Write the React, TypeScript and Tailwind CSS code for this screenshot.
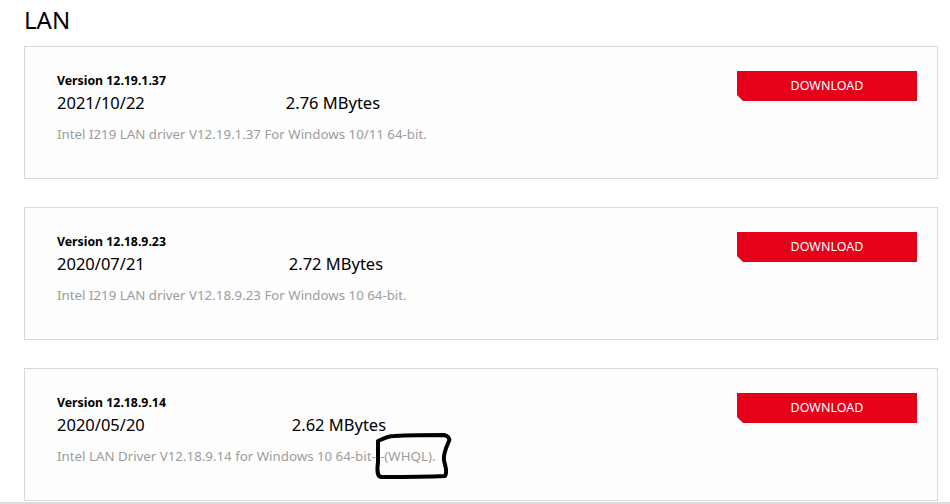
const drivers = [
  {
    version: "12.19.1.37",
    date: "2021/10/22",
    size: "2.76 MBytes",
    sizeGap: "ml-[141px]",
    desc: "Intel I219 LAN driver V12.19.1.37 For Windows 10/11 64-bit.",
  },
  {
    version: "12.18.9.23",
    date: "2020/07/21",
    size: "2.72 MBytes",
    sizeGap: "ml-[144px]",
    desc: "Intel I219 LAN driver V12.18.9.23 For Windows 10 64-bit.",
  },
  {
    version: "12.18.9.14",
    date: "2020/05/20",
    size: "2.62 MBytes",
    sizeGap: "ml-[147px]",
    desc: "Intel LAN Driver V12.18.9.14 for Windows 10 64-bit---(WHQL).",
    marked: true,
  },
];

const DriverCard = ({ d }: { d: (typeof drivers)[number] }) => (
  <div className="relative flex justify-between h-[133px] border border-[#d9d9d9] bg-[#fefefe] pt-[24px] pl-[32px] pr-[20px]">
    <div className="pt-[2px]">
      <div className="text-[12.3px] leading-[16px] font-bold text-black">Version {d.version}</div>
      <div className="mt-[4px] flex text-[16.5px] leading-[20px] text-black">
        <span>{d.date}</span>
        <span className={d.sizeGap}>{d.size}</span>
      </div>
      <div className="relative mt-[11px] text-[13.3px] leading-[20px] text-[#9c9c9c]">
        {d.desc}
        {d.marked && (
          // hand drawn marker around (WHQL)
          <svg
            className="absolute left-[317px] top-[-14px] overflow-visible"
            width="80"
            height="50"
            viewBox="0 0 80 50"
            fill="none"
          >
            <path
              d="M4 9 C 10 6, 14 4, 20 4 C 40 3, 60 3, 70 3 C 74 4, 76 6, 75 9 C 72 16, 69 22, 70 28 C 71 34, 74 40, 71 44 C 50 45, 25 45, 7 45 C 3 44, 3 38, 4 30 C 4 22, 4 15, 4 9 Z"
              stroke="black"
              strokeWidth="4"
              strokeLinejoin="round"
            />
          </svg>
        )}
      </div>
    </div>
    <button className="w-[180px] h-[30px] pt-[1px] bg-[#e60019] text-white text-[12.5px] [clip-path:polygon(0_0,100%_0,100%_100%,6px_100%,0_calc(100%_-_6px))]">
      DOWNLOAD
    </button>
  </div>
);

export default function App() {
  return (
    <div className="w-[950px] h-[504px] overflow-hidden bg-white font-['Noto_Sans','Open_Sans',sans-serif]">
      <div className="ml-[24px] w-[914px]">
        <h1 className="pt-[4px] text-[24px] leading-[32px] text-black">LAN</h1>
        <div className="mt-[10px] flex flex-col gap-[28px]">
          {drivers.map((d) => (
            <DriverCard key={d.version} d={d} />
          ))}
        </div>
      </div>
      <div className="mt-[1px] h-[4px] bg-[#dcdcdc]" />
    </div>
  );
}
